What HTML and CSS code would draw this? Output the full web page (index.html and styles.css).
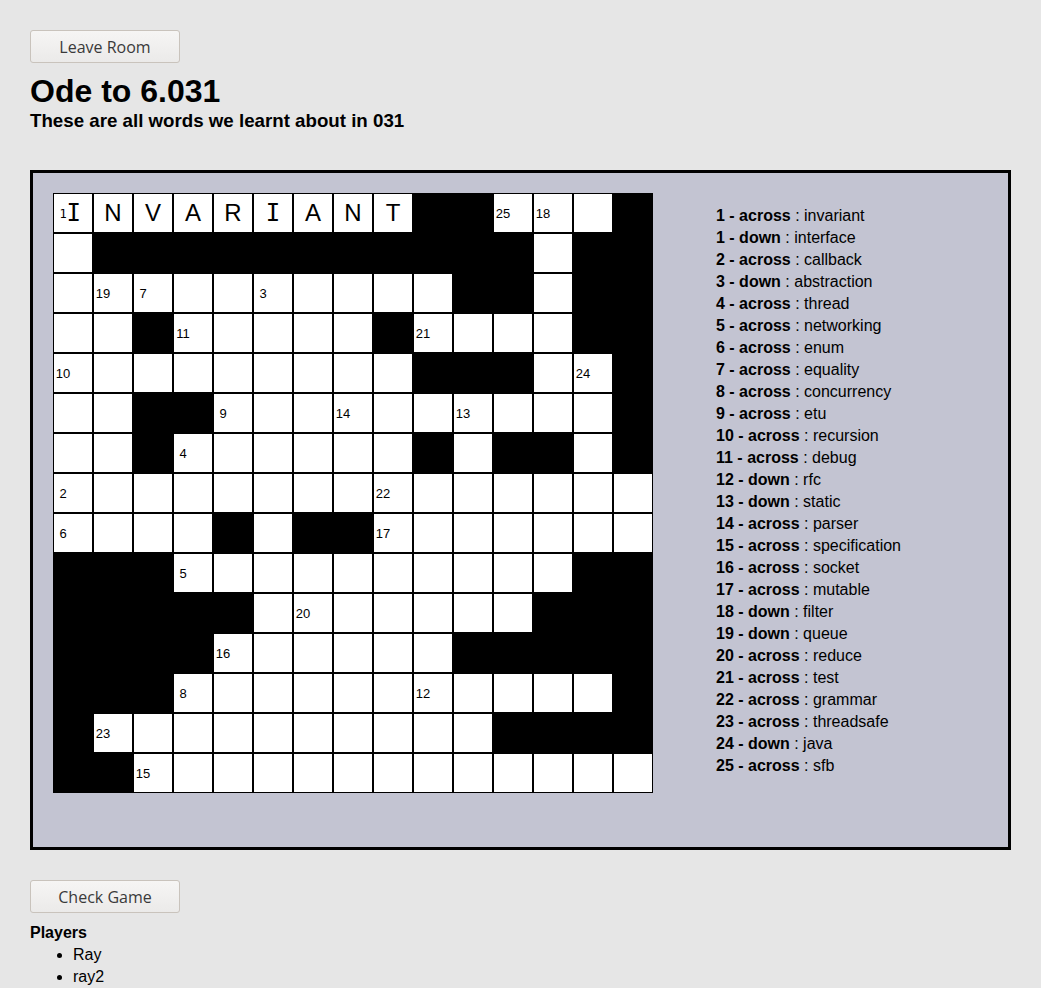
FILE: index.html
```html
<!DOCTYPE html>
<html>
<head>
<meta charset="utf-8">
<title>Ode to 6.031</title>
<link rel="stylesheet" href="styles.css">
</head>
<body>
<div class="page">
  <button class="btn">Leave Room</button>
  <h1 class="title">Ode to 6.031</h1>
  <h3 class="subtitle">These are all words we learnt about in 031</h3>

  <div class="board">
    <div class="grid">
      <!-- row 0 -->
      <div class="cell"><span class="num one">1</span><span class="ltr ii first">I</span></div>
      <div class="cell"><span class="ltr">N</span></div>
      <div class="cell"><span class="ltr">V</span></div>
      <div class="cell"><span class="ltr">A</span></div>
      <div class="cell"><span class="ltr">R</span></div>
      <div class="cell"><span class="ltr ii">I</span></div>
      <div class="cell"><span class="ltr">A</span></div>
      <div class="cell"><span class="ltr">N</span></div>
      <div class="cell"><span class="ltr">T</span></div>
      <div class="cell blk"></div>
      <div class="cell blk"></div>
      <div class="cell"><span class="num">25</span><span class="slot"></span></div>
      <div class="cell"><span class="num">18</span><span class="slot"></span></div>
      <div class="cell"></div>
      <div class="cell blk"></div>
      <!-- row 1 -->
      <div class="cell"></div>
      <div class="cell blk"></div><div class="cell blk"></div><div class="cell blk"></div><div class="cell blk"></div>
      <div class="cell blk"></div><div class="cell blk"></div><div class="cell blk"></div><div class="cell blk"></div>
      <div class="cell blk"></div><div class="cell blk"></div><div class="cell blk"></div>
      <div class="cell"></div>
      <div class="cell blk"></div><div class="cell blk"></div>
      <!-- row 2 -->
      <div class="cell"></div>
      <div class="cell"><span class="num">19</span><span class="slot"></span></div>
      <div class="cell"><span class="num">7</span><span class="slot"></span></div>
      <div class="cell"></div>
      <div class="cell"></div>
      <div class="cell"><span class="num">3</span><span class="slot"></span></div>
      <div class="cell"></div>
      <div class="cell"></div>
      <div class="cell"></div>
      <div class="cell"></div>
      <div class="cell blk"></div><div class="cell blk"></div>
      <div class="cell"></div>
      <div class="cell blk"></div><div class="cell blk"></div>
      <!-- row 3 -->
      <div class="cell"></div>
      <div class="cell"></div>
      <div class="cell blk"></div>
      <div class="cell"><span class="num">11</span><span class="slot"></span></div>
      <div class="cell"></div>
      <div class="cell"></div>
      <div class="cell"></div>
      <div class="cell"></div>
      <div class="cell blk"></div>
      <div class="cell"><span class="num">21</span><span class="slot"></span></div>
      <div class="cell"></div>
      <div class="cell"></div>
      <div class="cell"></div>
      <div class="cell blk"></div><div class="cell blk"></div>
      <!-- row 4 -->
      <div class="cell"><span class="num">10</span><span class="slot"></span></div>
      <div class="cell"></div><div class="cell"></div><div class="cell"></div><div class="cell"></div>
      <div class="cell"></div><div class="cell"></div><div class="cell"></div><div class="cell"></div>
      <div class="cell blk"></div><div class="cell blk"></div><div class="cell blk"></div>
      <div class="cell"></div>
      <div class="cell"><span class="num">24</span><span class="slot"></span></div>
      <div class="cell blk"></div>
      <!-- row 5 -->
      <div class="cell"></div>
      <div class="cell"></div>
      <div class="cell blk"></div><div class="cell blk"></div>
      <div class="cell"><span class="num">9</span><span class="slot"></span></div>
      <div class="cell"></div>
      <div class="cell"></div>
      <div class="cell"><span class="num">14</span><span class="slot"></span></div>
      <div class="cell"></div>
      <div class="cell"></div>
      <div class="cell"><span class="num">13</span><span class="slot"></span></div>
      <div class="cell"></div>
      <div class="cell"></div>
      <div class="cell"></div>
      <div class="cell blk"></div>
      <!-- row 6 -->
      <div class="cell"></div>
      <div class="cell"></div>
      <div class="cell blk"></div>
      <div class="cell"><span class="num">4</span><span class="slot"></span></div>
      <div class="cell"></div><div class="cell"></div><div class="cell"></div><div class="cell"></div><div class="cell"></div>
      <div class="cell blk"></div>
      <div class="cell"></div>
      <div class="cell blk"></div><div class="cell blk"></div>
      <div class="cell"></div>
      <div class="cell blk"></div>
      <!-- row 7 -->
      <div class="cell"><span class="num">2</span><span class="slot"></span></div>
      <div class="cell"></div><div class="cell"></div><div class="cell"></div><div class="cell"></div>
      <div class="cell"></div><div class="cell"></div><div class="cell"></div>
      <div class="cell"><span class="num">22</span><span class="slot"></span></div>
      <div class="cell"></div><div class="cell"></div><div class="cell"></div>
      <div class="cell"></div><div class="cell"></div><div class="cell"></div>
      <!-- row 8 -->
      <div class="cell"><span class="num">6</span><span class="slot"></span></div>
      <div class="cell"></div><div class="cell"></div><div class="cell"></div>
      <div class="cell blk"></div>
      <div class="cell"></div>
      <div class="cell blk"></div><div class="cell blk"></div>
      <div class="cell"><span class="num">17</span><span class="slot"></span></div>
      <div class="cell"></div><div class="cell"></div><div class="cell"></div>
      <div class="cell"></div><div class="cell"></div><div class="cell"></div>
      <!-- row 9 -->
      <div class="cell blk"></div><div class="cell blk"></div><div class="cell blk"></div>
      <div class="cell"><span class="num">5</span><span class="slot"></span></div>
      <div class="cell"></div><div class="cell"></div><div class="cell"></div>
      <div class="cell"></div><div class="cell"></div><div class="cell"></div>
      <div class="cell"></div><div class="cell"></div><div class="cell"></div>
      <div class="cell blk"></div><div class="cell blk"></div>
      <!-- row 10 -->
      <div class="cell blk"></div><div class="cell blk"></div><div class="cell blk"></div><div class="cell blk"></div><div class="cell blk"></div>
      <div class="cell"></div>
      <div class="cell"><span class="num">20</span><span class="slot"></span></div>
      <div class="cell"></div><div class="cell"></div><div class="cell"></div><div class="cell"></div><div class="cell"></div>
      <div class="cell blk"></div><div class="cell blk"></div><div class="cell blk"></div>
      <!-- row 11 -->
      <div class="cell blk"></div><div class="cell blk"></div><div class="cell blk"></div><div class="cell blk"></div>
      <div class="cell"><span class="num">16</span><span class="slot"></span></div>
      <div class="cell"></div><div class="cell"></div><div class="cell"></div><div class="cell"></div><div class="cell"></div>
      <div class="cell blk"></div><div class="cell blk"></div><div class="cell blk"></div><div class="cell blk"></div><div class="cell blk"></div>
      <!-- row 12 -->
      <div class="cell blk"></div><div class="cell blk"></div><div class="cell blk"></div>
      <div class="cell"><span class="num">8</span><span class="slot"></span></div>
      <div class="cell"></div><div class="cell"></div><div class="cell"></div><div class="cell"></div><div class="cell"></div>
      <div class="cell"><span class="num">12</span><span class="slot"></span></div>
      <div class="cell"></div><div class="cell"></div><div class="cell"></div><div class="cell"></div>
      <div class="cell blk"></div>
      <!-- row 13 -->
      <div class="cell blk"></div>
      <div class="cell"><span class="num">23</span><span class="slot"></span></div>
      <div class="cell"></div><div class="cell"></div><div class="cell"></div>
      <div class="cell"></div><div class="cell"></div><div class="cell"></div>
      <div class="cell"></div><div class="cell"></div><div class="cell"></div>
      <div class="cell blk"></div><div class="cell blk"></div><div class="cell blk"></div><div class="cell blk"></div>
      <!-- row 14 -->
      <div class="cell blk"></div><div class="cell blk"></div>
      <div class="cell"><span class="num">15</span><span class="slot"></span></div>
      <div class="cell"></div><div class="cell"></div><div class="cell"></div><div class="cell"></div>
      <div class="cell"></div><div class="cell"></div><div class="cell"></div><div class="cell"></div>
      <div class="cell"></div><div class="cell"></div><div class="cell"></div><div class="cell"></div>
    </div>

    <ul class="clues">
      <li><b>1 - across</b> : invariant</li>
      <li><b>1 - down</b> : interface</li>
      <li><b>2 - across</b> : callback</li>
      <li><b>3 - down</b> : abstraction</li>
      <li><b>4 - across</b> : thread</li>
      <li><b>5 - across</b> : networking</li>
      <li><b>6 - across</b> : enum</li>
      <li><b>7 - across</b> : equality</li>
      <li><b>8 - across</b> : concurrency</li>
      <li><b>9 - across</b> : etu</li>
      <li><b>10 - across</b> : recursion</li>
      <li><b>11 - across</b> : debug</li>
      <li><b>12 - down</b> : rfc</li>
      <li><b>13 - down</b> : static</li>
      <li><b>14 - across</b> : parser</li>
      <li><b>15 - across</b> : specification</li>
      <li><b>16 - across</b> : socket</li>
      <li><b>17 - across</b> : mutable</li>
      <li><b>18 - down</b> : filter</li>
      <li><b>19 - down</b> : queue</li>
      <li><b>20 - across</b> : reduce</li>
      <li><b>21 - across</b> : test</li>
      <li><b>22 - across</b> : grammar</li>
      <li><b>23 - across</b> : threadsafe</li>
      <li><b>24 - down</b> : java</li>
      <li><b>25 - across</b> : sfb</li>
    </ul>
  </div>

  <button class="btn check">Check Game</button>
  <div class="players-title">Players</div>
  <ul class="players">
    <li>Ray</li>
    <li>ray2</li>
  </ul>
</div>
</body>
</html>
```

FILE: styles.css
```css
html, body {
  margin: 0;
  padding: 0;
  background: #e6e6e6;
}

.page {
  padding: 30px;
  font-family: "Liberation Sans", Arial, sans-serif;
  color: #000;
}

.btn {
  display: block;
  width: 150px;
  height: 33px;
  margin: 0;
  padding: 1px 0 0;
  border: 1px solid #c9c3bc;
  border-radius: 3px;
  background: linear-gradient(#f6f5f4, #ebeae9);
  color: #3a3a3a;
  font-family: "Open Sans", "Noto Sans", sans-serif;
  font-size: 16px;
  line-height: 30px;
  text-align: center;
}

.title {
  margin: 10px 0 0;
  font-size: 32px;
  line-height: 37px;
  font-weight: bold;
}

.subtitle {
  margin: 0 0 38px;
  font-size: 18.72px;
  line-height: 22px;
  font-weight: bold;
}

.board {
  display: flex;
  align-items: flex-start;
  gap: 63px;
  border: 3px solid #000;
  background: #c3c4d2;
  padding: 20px;
  box-sizing: content-box;
  width: 935px;
  height: 634px;
}

.grid {
  display: grid;
  grid-template-columns: repeat(15, 40px);
  grid-template-rows: repeat(15, 40px);
  width: 600px;
  height: 600px;
  background: #000;
  flex: none;
}

.cell {
  box-sizing: border-box;
  width: 40px;
  height: 40px;
  border: 1px solid #000;
  background: #fff;
  display: flex;
  align-items: center;
  justify-content: center;
}

.cell.blk {
  background: #000;
}

.num {
  font-family: "Liberation Sans", Arial, sans-serif;
  font-size: 13px;
  line-height: 15px;
  color: #000;
}

.num.one {
  font-size: 12px;
  font-family: "DejaVu Sans Mono", monospace;
  margin-top: 2px;
}

.slot {
  display: inline-block;
  width: 20px;
  height: 15px;
}

.ltr {
  font-family: "Liberation Sans", Arial, sans-serif;
  font-size: 24px;
  line-height: 28px;
  color: #000;
}

.ltr.ii {
  font-family: "DejaVu Sans Mono", monospace;
  font-size: 24px;
}

.ltr.first {
  width: 20px;
  text-align: left;
  margin-left: 0;
}

.clues {
  list-style: none;
  margin: 12px 0 0;
  padding: 0;
  font-size: 16px;
  line-height: 22px;
}

.check {
  margin-top: 30px;
}

.players-title {
  margin-top: 9px;
  font-weight: bold;
  font-size: 16px;
  line-height: 22px;
}

.players {
  margin: 0;
  padding-left: 43px;
  font-size: 16px;
  line-height: 22px;
}
```
